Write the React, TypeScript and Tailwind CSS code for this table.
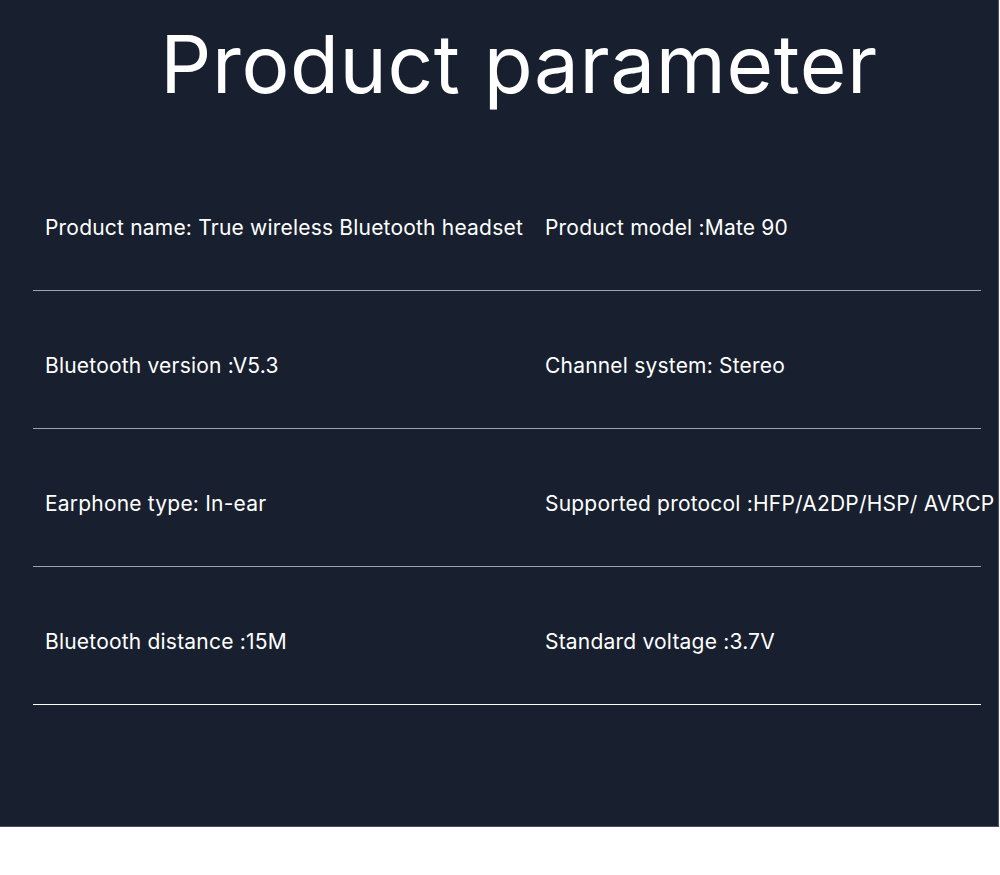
const params: Array<[string, string]> = [
  ["Product name: True wireless Bluetooth headset", "Product model :Mate 90"],
  ["Bluetooth version :V5.3", "Channel system: Stereo"],
  ["Earphone type: In-ear", "Supported protocol :HFP/A2DP/HSP/ AVRCP"],
  ["Bluetooth distance :15M", "Standard voltage :3.7V"],
];

export default function App() {
  return (
    <div className="h-[875px] w-[1000px] overflow-hidden bg-white" style={{ fontFamily: "Inter, 'Liberation Sans', sans-serif" }}>
      <section className="h-[827px] w-[999px] overflow-hidden border-b border-r border-[#4a5163] bg-[#181f2f] text-white">
        <h1 className="pl-[40px] pt-[14px] text-center text-[80px] leading-[100px] tracking-[0.6px]">Product parameter</h1>

        <div className="ml-[33px] mt-[39px] w-[948px]">
          {params.map(([left, right], i) => (
            <div
              key={left}
              className={`flex h-[138px] items-center whitespace-nowrap border-b pt-[12px] text-[21px] tracking-[0.2px] ${i === params.length - 1 ? "border-white" : "border-[#9ea3ad]"}`}
            >
              <p className="w-[512px] shrink-0 pl-[12px]">{left}</p>
              <p>{right}</p>
            </div>
          ))}
        </div>
      </section>
    </div>
  );
}
